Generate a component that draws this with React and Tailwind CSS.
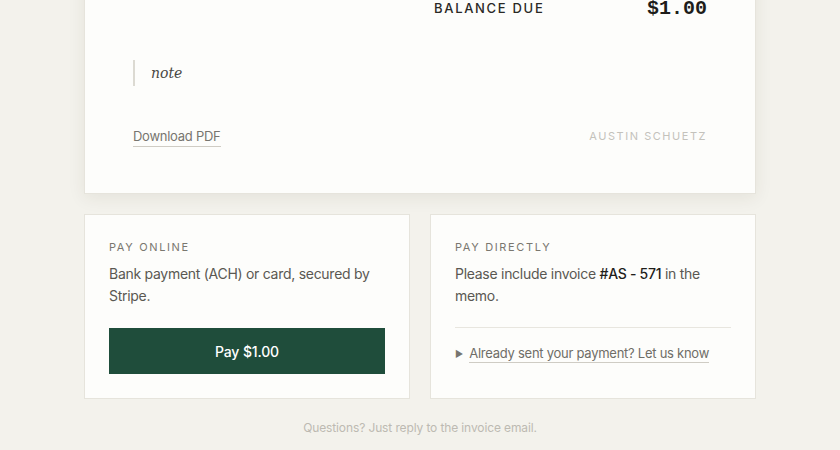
import React from "react";

export default function App() {
  const sans = { fontFamily: "Inter, 'Liberation Sans', sans-serif" };
  return (
    <div className="min-h-screen bg-[#f3f2ec] overflow-hidden" style={sans}>
      <div className="w-[672px] mx-auto">
        <div className="-mt-[38px] bg-[#fdfdfb] border border-[#e6e4dc] shadow-[0_4px_16px_rgba(60,50,30,0.08)] px-[48px] pt-[32px] pb-[46px]">
          <div className="flex justify-end">
            <div className="w-[273px] flex justify-between items-center h-[28px]">
              <span className="text-[13px] tracking-[0.13em] text-[#2a2925] font-medium">BALANCE DUE</span>
              <span className="text-[20px] font-bold text-[#1e1d1a]" style={{ fontFamily: "'Liberation Mono', 'DejaVu Sans Mono', monospace" }}>$1.00</span>
            </div>
          </div>
          <div className="mt-[37px] border-l-2 border-[#dcdad2] pl-[16px] h-[26px] flex items-center">
            <span className="italic text-[14px] text-[#4a4843]" style={{ fontFamily: "'DejaVu Serif', Georgia, serif" }}>note</span>
          </div>
          <div className="mt-[40px] flex justify-between items-center">
            <span className="text-[13px] leading-[20px] tracking-[-0.02em] text-[#77756f] border-b border-[#cfccc4]">Download PDF</span>
            <span className="text-[11px] tracking-[0.14em] text-[#c4c2bb]">AUSTIN SCHUETZ</span>
          </div>
        </div>

        <div className="mt-[20px] grid grid-cols-2 gap-[20px]">
          <div className="bg-[#fdfdfb] border border-[#e6e4dc] p-[24px]">
            <div className="text-[11px] leading-[16px] tracking-[0.15em] text-[#7a776f]">PAY ONLINE</div>
            <p className="mt-[8px] text-[14px] leading-[22px] tracking-[-0.02em] text-[#5a5852]">Bank payment (ACH) or card, secured by Stripe.</p>
            <button className="mt-[21px] w-full h-[46px] bg-[#1f4d3b] text-white text-[14px] font-medium tracking-[-0.01em] flex items-center justify-center">Pay $1.00</button>
          </div>
          <div className="bg-[#fdfdfb] border border-[#e6e4dc] p-[24px]">
            <div className="text-[11px] leading-[16px] tracking-[0.15em] text-[#7a776f]">PAY DIRECTLY</div>
            <p className="mt-[8px] text-[14px] leading-[22px] tracking-[-0.02em] text-[#5a5852]">
              Please include invoice <span className="text-[#1f1e1b] font-medium">#AS - 571</span> in the memo.
            </p>
            <div className="mt-[20px] border-t border-[#e8e6df] pt-[16px] flex items-center">
              <span className="text-[#77756f] text-[9px] mr-[6px]">▶</span>
              <span className="text-[13px] leading-[18px] tracking-[-0.02em] text-[#6f6d67] border-b border-[#cfccc4]">Already sent your payment? Let us know</span>
            </div>
          </div>
        </div>

        <div className="mt-[20px] text-center text-[12px] leading-[18px] tracking-[-0.01em] text-[#bdbab2]">Questions? Just reply to the invoice email.</div>
      </div>
    </div>
  );
}
